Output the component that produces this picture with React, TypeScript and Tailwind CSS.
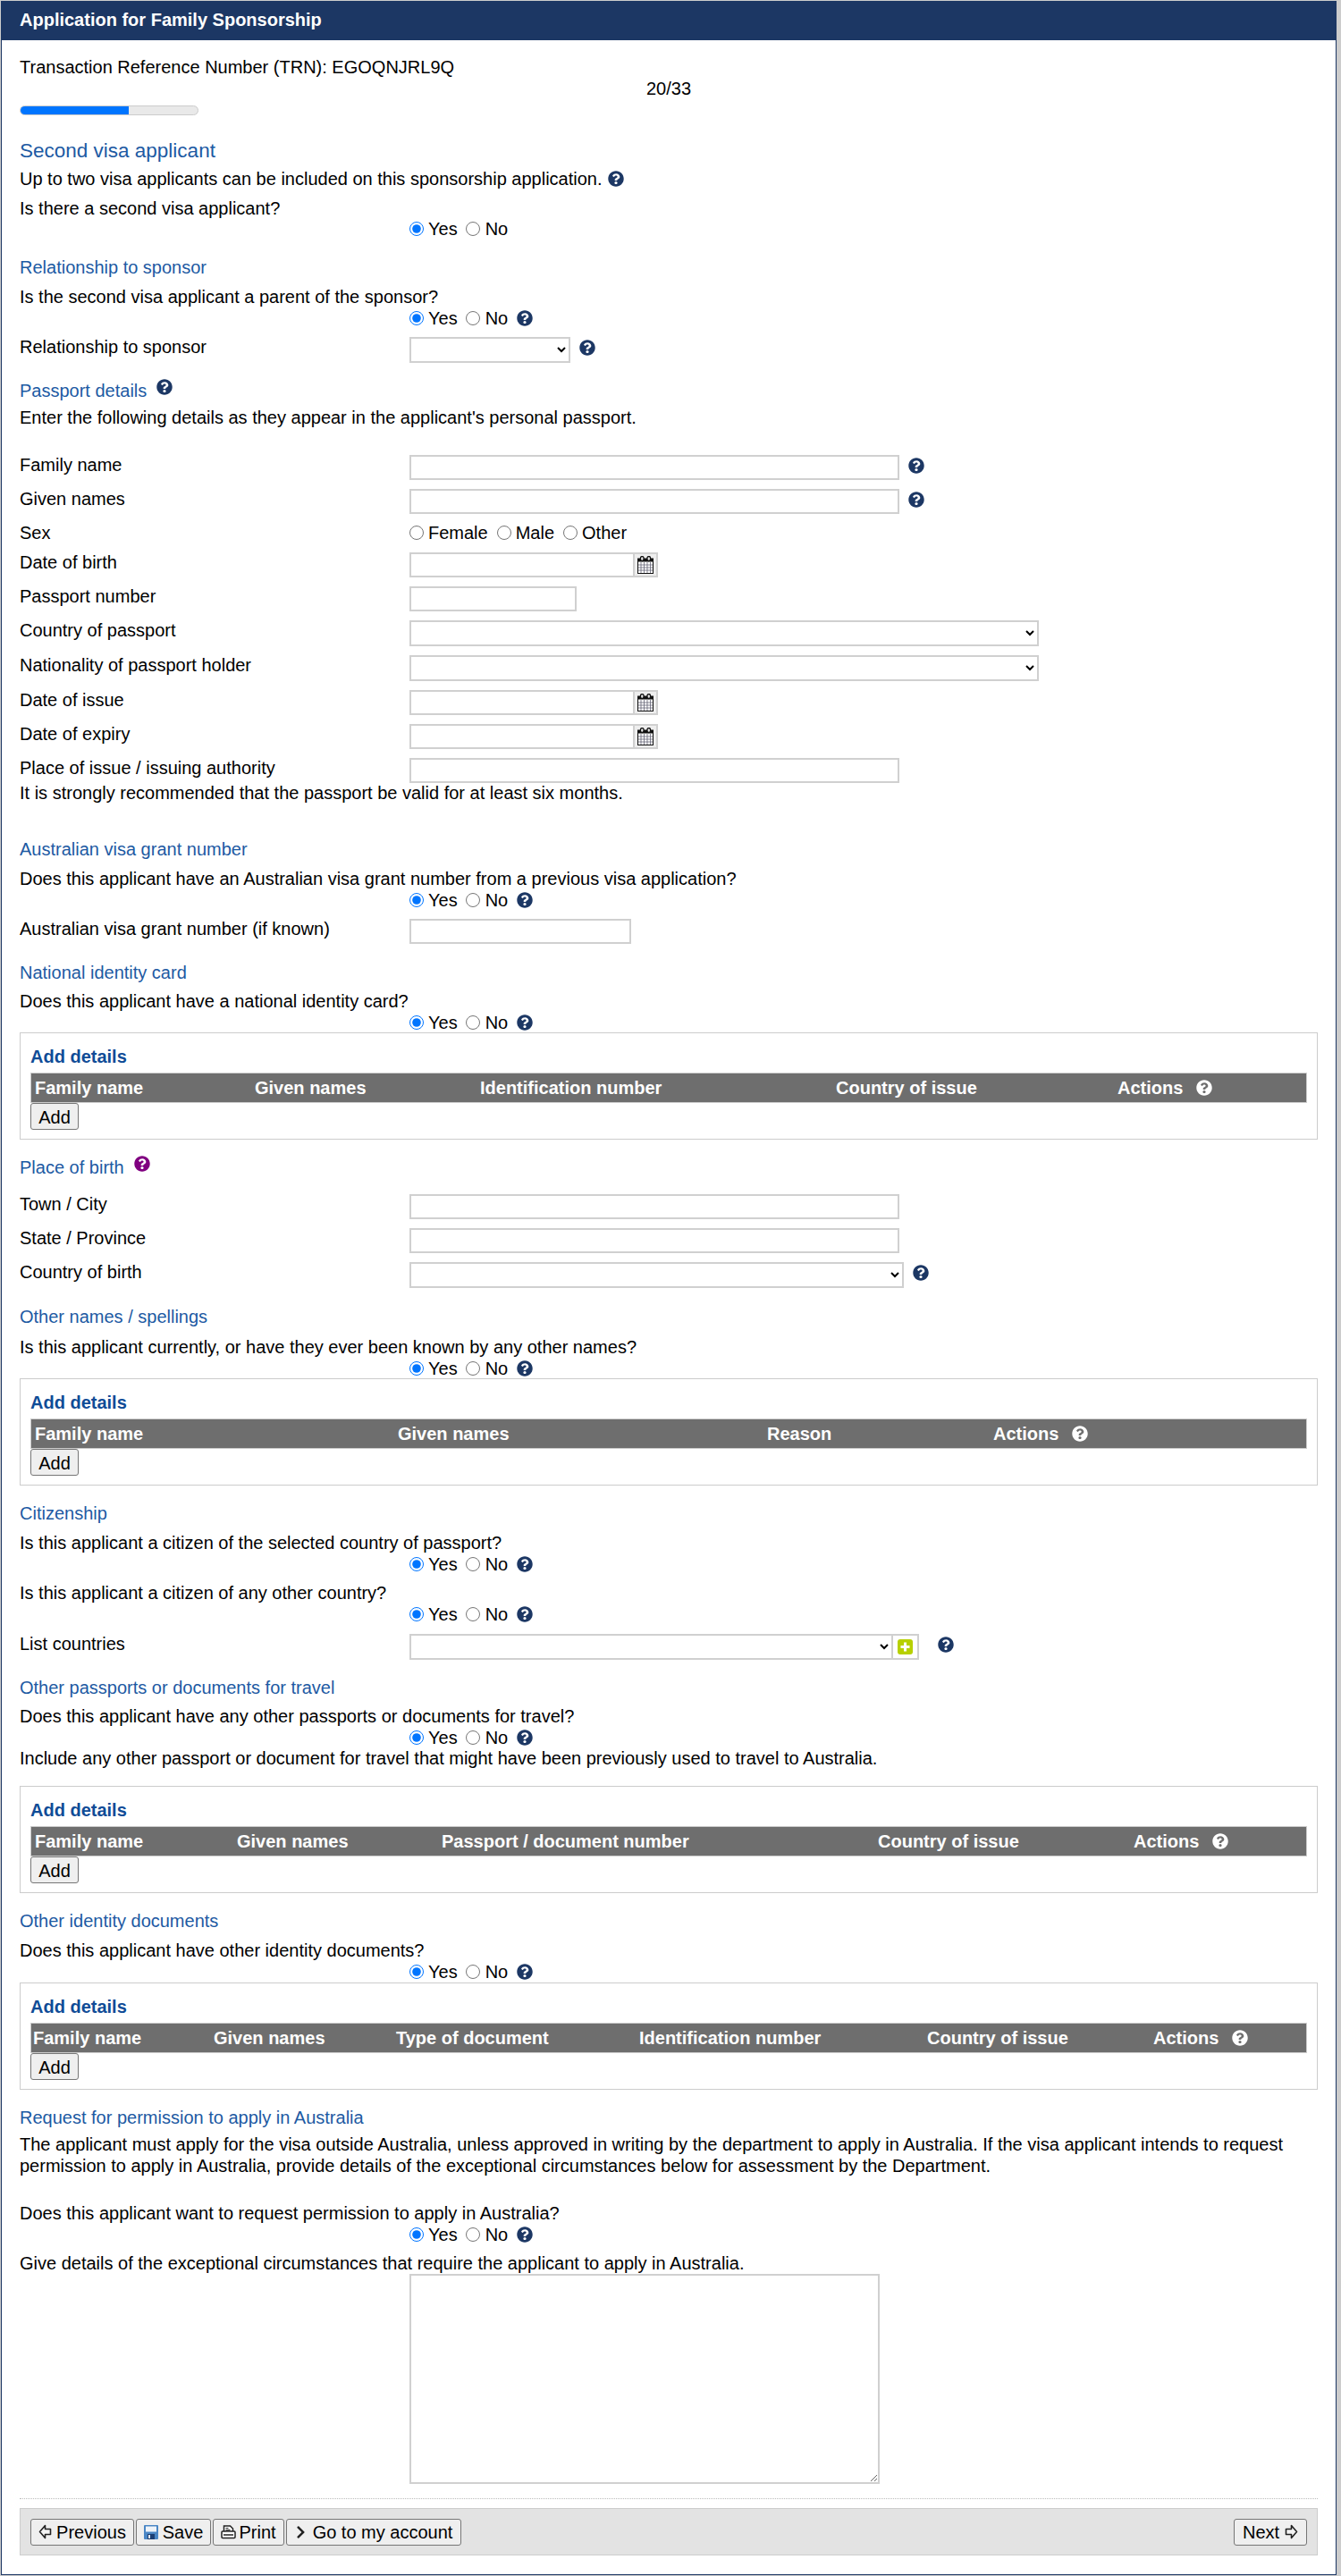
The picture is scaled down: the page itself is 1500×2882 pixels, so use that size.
import React from "react";
import { FaQuestionCircle, FaChevronRight } from "react-icons/fa";

let uid = 0;

function Help({ className = "text-[#1c3764]" }: { className?: string }) {
  return <FaQuestionCircle className={"inline-block w-[18px] h-[18px] shrink-0 " + className} />;
}

function YesNo({ help = true, className = "" }: { help?: boolean; className?: string }) {
  const name = React.useMemo(() => "r" + uid++, []);
  return (
    <div className={"flex items-center h-[23px] pl-[436px] " + className}>
      <input type="radio" name={name} defaultChecked className="w-4 h-4 m-0" />
      <span className="ml-[5px]">Yes</span>
      <input type="radio" name={name} className="w-4 h-4 m-0 ml-[9px]" />
      <span className="ml-[6px]">No</span>
      {help && <Help className="ml-[10px] text-[#1c3764]" />}
    </div>
  );
}

function H({ children, className = "" }: { children: React.ReactNode; className?: string }) {
  return <h3 className={"h-6 leading-6 text-[#1d5aa3] font-normal " + className}>{children}</h3>;
}

function P({ children, className = "" }: { children: React.ReactNode; className?: string }) {
  return <p className={"h-6 leading-6 " + className}>{children}</p>;
}

function Row({ label, children, className = "" }: { label: string; children?: React.ReactNode; className?: string }) {
  return (
    <div className={"flex items-start " + className}>
      <label className="w-[436px] shrink-0 leading-[22px]">{label}</label>
      {children}
    </div>
  );
}

function Text({ className }: { className: string }) {
  return <input type="text" className={"h-[28px] border-2 border-[#d0d0d0] bg-white block " + className} />;
}

function Sel({ className }: { className: string }) {
  return (
    <select className={"h-[29px] border-2 border-[#d0d0d0] bg-white block " + className}>
      <option></option>
    </select>
  );
}

function Calendar() {
  return (
    <svg width="18" height="20" viewBox="0 0 18 20" className="block">
      <rect x="0.5" y="3" width="17" height="16.5" fill="#fff" stroke="#111" />
      <rect x="0" y="3" width="18" height="3.5" fill="#111" />
      <rect x="3.5" y="0.5" width="3.5" height="5" rx="1.7" fill="#e8e8e8" stroke="#111" strokeWidth="1.3" />
      <rect x="11" y="0.5" width="3.5" height="5" rx="1.7" fill="#e8e8e8" stroke="#111" strokeWidth="1.3" />
      <path d="M1 10h16M1 13h16M1 16h16M4 7v12M7.5 7v12M11 7v12M14.5 7v12" stroke="#667" strokeWidth="0.8" fill="none" />
    </svg>
  );
}

function DateField() {
  return (
    <div className="flex">
      <input type="text" className="w-[250px] h-[28px] border-2 border-r-0 border-[#d0d0d0] bg-white block" />
      <span className="w-[28px] h-[28px] border-2 border-[#d0d0d0] bg-[#eeeeee] flex items-center justify-center">
        <Calendar />
      </span>
    </div>
  );
}

function Details({
  cols,
  grid,
  help,
  className = "",
}: {
  cols: string[];
  grid: string;
  help: string;
  className?: string;
}) {
  return (
    <section className={"border border-[#cccccc] px-[11px] pt-[14px] pb-[10px] w-[1452px] " + className}>
      <div className="h-6 leading-6 font-bold text-[#0f4c97] mb-[6px]">Add details</div>
      <div className={"h-[34px] bg-[#6e6e6e] border border-[#cccccc] items-center text-white font-bold grid " + grid}>
        {cols.map((c) => (
          <span key={c} className="whitespace-nowrap">
            {c}
          </span>
        ))}
        <span className="flex items-center whitespace-nowrap">
          Actions
          <Help className={"text-white " + help} />
        </span>
      </div>
      <button className="block h-[30px] w-[54px] bg-[#efefef] border border-[#767676] rounded-[3px] text-center">
        Add
      </button>
    </section>
  );
}

function ArrowLeft() {
  return (
    <svg width="15" height="17" viewBox="0 0 15 17" className="inline-block">
      <path d="M7.5 1.5 1.5 8.5l6 7v-4h6v-6h-6z" fill="#f3f3f3" stroke="#222" strokeWidth="1.6" strokeLinejoin="round" />
    </svg>
  );
}

function ArrowRight() {
  return (
    <svg width="15" height="17" viewBox="0 0 15 17" className="inline-block">
      <path d="M7.5 1.5l6 7-6 7v-4h-6v-6h6z" fill="#f3f3f3" stroke="#222" strokeWidth="1.6" strokeLinejoin="round" />
    </svg>
  );
}

function Floppy() {
  return (
    <svg width="16" height="16" viewBox="0 0 16 16" className="inline-block">
      <rect x="0" y="0" width="16" height="16" rx="1" fill="#4a86c5" />
      <rect x="2" y="1.5" width="12" height="6" fill="#eef3f9" />
      <rect x="4" y="10" width="8" height="6" fill="#1c3f73" />
      <rect x="5" y="11" width="2" height="4" fill="#dfe8f2" />
    </svg>
  );
}

function Printer() {
  return (
    <svg width="17" height="16" viewBox="0 0 17 16" className="inline-block">
      <path d="M3.5 7V1h7l3 3v3" fill="#fff" stroke="#222" strokeWidth="1.5" />
      <path d="M5.5 3.5h3M5.5 5.5h5" stroke="#222" strokeWidth="1" />
      <rect x="1" y="7" width="15" height="7.5" rx="1" fill="#fff" stroke="#222" strokeWidth="1.5" />
      <path d="M3 11h11" stroke="#222" strokeWidth="1.5" />
    </svg>
  );
}

function NavBtn({ children, className = "" }: { children: React.ReactNode; className?: string }) {
  return (
    <button className={"h-[30px] bg-[#efefef] border border-[#767676] rounded-[3px] flex items-center justify-center whitespace-nowrap " + className}>
      {children}
    </button>
  );
}

export default function App() {
  return (
    <div className="bg-[#cccccc] pt-px pl-px pb-[2px] font-['Liberation_Sans',Arial,sans-serif] text-[20px] text-[#000000]">
      <main className="w-[1494px] border border-[#1c3764] bg-white">
        <header className="h-[43px] bg-[#1c3764] text-white font-bold leading-[41px] pl-5">
          Application for Family Sponsorship
        </header>
        <div className="px-5 pb-[21px]">
          <p className="h-[23px] leading-[23px] mt-[19px]">Transaction Reference Number (TRN): EGOQNJRL9Q</p>
          <p className="h-6 leading-6 text-center w-[1452px]">20/33</p>
          <div className="mt-[7px] w-[200px] h-[11px] bg-[#e9e9e9] border border-[#cccccc] rounded-full overflow-hidden">
            <div className="h-full w-[61%] bg-[#0075ff]"></div>
          </div>

          <h2 className="mt-[26px] h-7 leading-7 text-[22.5px] font-normal text-[#1d5aa3]">Second visa applicant</h2>
          <P className="mt-[5px] flex items-center">
            Up to two visa applicants can be included on this sponsorship application.
            <Help className="ml-[6px] text-[#1c3764]" />
          </P>
          <P className="mt-[9px]">Is there a second visa applicant?</P>
          <YesNo help={false} className="-mt-[1px]" />

          <H className="mt-[20px]">Relationship to sponsor</H>
          <P className="mt-[9px]">Is the second visa applicant a parent of the sponsor?</P>
          <YesNo />
          <Row label="Relationship to sponsor" className="mt-[10px]">
            <Sel className="w-[180px]" />
            <Help className="ml-[10px] mt-[3px] text-[#1c3764]" />
          </Row>

          <H className="mt-[19px] flex items-start">
            <span>Passport details</span>
            <Help className="ml-[11px] -mt-[1px] text-[#1c3764]" />
          </H>
          <P className="mt-[6px]">Enter the following details as they appear in the applicant's personal passport.</P>

          <Row label="Family name" className="mt-[30px]">
            <Text className="w-[548px]" />
            <Help className="ml-[10px] mt-[3px] text-[#1c3764]" />
          </Row>
          <Row label="Given names" className="mt-[10px]">
            <Text className="w-[548px]" />
            <Help className="ml-[10px] mt-[3px] text-[#1c3764]" />
          </Row>
          <div className="flex items-center h-6 mt-[9px]">
            <label className="w-[436px] shrink-0">Sex</label>
            <input type="radio" name="sex" className="w-4 h-4 m-0" />
            <span className="ml-[5px]">Female</span>
            <input type="radio" name="sex" className="w-4 h-4 m-0 ml-[10px]" />
            <span className="ml-[5px]">Male</span>
            <input type="radio" name="sex" className="w-4 h-4 m-0 ml-[10px]" />
            <span className="ml-[5px]">Other</span>
          </div>
          <Row label="Date of birth" className="mt-[10px]">
            <DateField />
          </Row>
          <Row label="Passport number" className="mt-[10px]">
            <Text className="w-[187px]" />
          </Row>
          <Row label="Country of passport" className="mt-[10px]">
            <Sel className="w-[704px]" />
          </Row>
          <Row label="Nationality of passport holder" className="mt-[10px]">
            <Sel className="w-[704px]" />
          </Row>
          <Row label="Date of issue" className="mt-[10px]">
            <DateField />
          </Row>
          <Row label="Date of expiry" className="mt-[10px]">
            <DateField />
          </Row>
          <Row label="Place of issue / issuing authority" className="mt-[10px]">
            <Text className="w-[548px]" />
          </Row>
          <p className="h-[23px] leading-[23px]">It is strongly recommended that the passport be valid for at least six months.</p>

          <H className="mt-[39px]">Australian visa grant number</H>
          <P className="mt-[9px]">Does this applicant have an Australian visa grant number from a previous visa application?</P>
          <YesNo />
          <Row label="Australian visa grant number (if known)" className="mt-[10px]">
            <Text className="w-[248px]" />
          </Row>

          <H className="mt-[20px]">National identity card</H>
          <P className="mt-[8px]">Does this applicant have a national identity card?</P>
          <YesNo className="h-6" />
          <Details
            cols={["Family name", "Given names", "Identification number", "Country of issue"]}
            grid="pl-1 grid-cols-[246px_252px_398px_315px_1fr]"
            help="ml-[15px]"
          />

          <H className="mt-[19px] flex items-start">
            <span>Place of birth</span>
            <Help className="ml-[11px] -mt-[1px] text-[#800080]" />
          </H>
          <Row label="Town / City" className="mt-[18px]">
            <Text className="w-[548px]" />
          </Row>
          <Row label="State / Province" className="mt-[10px]">
            <Text className="w-[548px]" />
          </Row>
          <Row label="Country of birth" className="mt-[10px]">
            <Sel className="w-[553px]" />
            <Help className="ml-[10px] mt-[3px] text-[#1c3764]" />
          </Row>

          <H className="mt-[20px]">Other names / spellings</H>
          <P className="mt-[10px]">Is this applicant currently, or have they ever been known by any other names?</P>
          <YesNo />
          <Details
            cols={["Family name", "Given names", "Reason"]}
            grid="pl-1 grid-cols-[406px_413px_253px_1fr]"
            help="ml-[15px]"
          />

          <H className="mt-[19px]">Citizenship</H>
          <P className="mt-[9px]">Is this applicant a citizen of the selected country of passport?</P>
          <YesNo />
          <P className="mt-[9px]">Is this applicant a citizen of any other country?</P>
          <YesNo />
          <Row label="List countries" className="mt-[11px]">
            <Sel className="w-[541px]" />
            <span className="w-[29px] h-[29px] border-2 border-l-0 border-[#d0d0d0] bg-white flex items-center justify-center">
              <svg width="17" height="17" viewBox="0 0 17 17">
                <rect width="17" height="17" rx="3" fill="#b7d000" />
                <path d="M8.5 3.5v10M3.5 8.5h10" stroke="#fff" strokeWidth="3" />
              </svg>
            </span>
            <Help className="ml-[21px] mt-[3px] text-[#1c3764]" />
          </Row>

          <H className="mt-[19px]">Other passports or documents for travel</H>
          <P className="mt-[8px]">Does this applicant have any other passports or documents for travel?</P>
          <YesNo />
          <p className="h-6 leading-6">Include any other passport or document for travel that might have been previously used to travel to Australia.</p>
          <Details
            cols={["Family name", "Given names", "Passport / document number", "Country of issue"]}
            grid="pl-1 grid-cols-[226px_229px_488px_286px_1fr]"
            help="ml-[15px]"
            className="mt-[19px]"
          />

          <H className="mt-[19px]">Other identity documents</H>
          <P className="mt-[9px]">Does this applicant have other identity documents?</P>
          <YesNo />
          <Details
            cols={["Family name", "Given names", "Type of document", "Identification number", "Country of issue"]}
            grid="pl-[2px] grid-cols-[202px_204px_272px_322px_253px_1fr]"
            help="ml-[15px]"
            className="mt-[1px]"
          />

          <H className="mt-[19px]">Request for permission to apply in Australia</H>
          <p className="mt-[6px] leading-6 w-[1452px]">
            The applicant must apply for the visa outside Australia, unless approved in writing by the department to apply in Australia. If the visa applicant intends to request permission to apply in Australia, provide details of the exceptional circumstances below for assessment by the Department.
          </p>
          <P className="mt-[29px]">Does this applicant want to request permission to apply in Australia?</P>
          <YesNo />
          <P className="mt-[9px]">Give details of the exceptional circumstances that require the applicant to apply in Australia.</P>
          <div className="pl-[436px]">
            <textarea className="block w-[526px] h-[235px] border-2 border-[#d0d0d0] bg-white"></textarea>
          </div>

          <div className="mt-[16px] w-[1452px] border-t border-dotted border-[#bbbbbb]"></div>
          <div className="mt-[10px] w-[1452px] h-[53px] bg-[#e3e3e3] border border-[#cccccc] px-[11px] flex items-center justify-between">
            <div className="flex gap-[2px]">
              <NavBtn className="w-[116px] gap-[5px]">
                <ArrowLeft />
                Previous
              </NavBtn>
              <NavBtn className="w-[84px] gap-[5px]">
                <Floppy />
                Save
              </NavBtn>
              <NavBtn className="w-[80px] gap-[3px]">
                <Printer />
                Print
              </NavBtn>
              <NavBtn className="w-[196px] gap-[7px]">
                <FaChevronRight className="w-[13px] h-[16px] text-[#222222]" />
                Go to my account
              </NavBtn>
            </div>
            <NavBtn className="w-[82px] gap-[6px]">
              Next
              <ArrowRight />
            </NavBtn>
          </div>
        </div>
      </main>
    </div>
  );
}
